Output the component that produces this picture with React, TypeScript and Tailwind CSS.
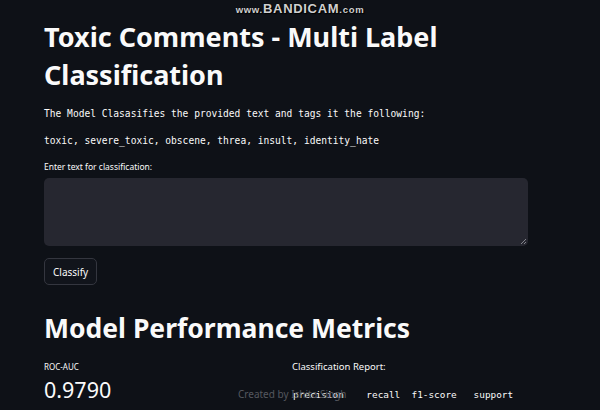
import React from "react";

export default function App() {
  const sans = { fontFamily: '"Noto Sans", "Open Sans", sans-serif' };
  const mono = { fontFamily: '"DejaVu Sans Mono", "Liberation Mono", monospace' };
  return (
    <div className="relative w-[600px] h-[410px] overflow-hidden bg-[#0e1117] text-[#fafafa]" style={sans}>
      <div className="absolute top-[1px] left-0 right-0 flex justify-center">
        <span
          className="text-[#d0d0d0] text-[13px] leading-[16px] font-bold tracking-[0.7px]"
          style={{ fontFamily: '"Liberation Sans", Arial, sans-serif', textShadow: "0 0 1px #000, 1px 1px 1px #000" }}
        >
          <span className="text-[9.5px]">www.</span>BANDICAM<span className="text-[9.5px]">.com</span>
        </span>
      </div>
      <div className="pl-[44px] pr-[72px] pt-[18px] flex flex-col">
        <h1 className="text-[27px] leading-[38px] font-bold">
          Toxic Comments - Multi Label Classification
        </h1>
        <p className="mt-[13px] text-[9.6px] leading-[14px] whitespace-pre" style={mono}>
          The Model Clasasifies the provided text and tags it the following:
        </p>
        <p className="mt-[13px] text-[9.6px] leading-[14px] whitespace-pre" style={mono}>
          toxic, severe_toxic, obscene, threa, insult, identity_hate
        </p>
        <label className="mt-[13px] text-[8.5px] leading-[12px]">Enter text for classification:</label>
        <div className="mt-[5px] h-[68px] rounded-[5px] bg-[#262730] relative">
          <svg className="absolute right-[1px] bottom-[1px]" width="7" height="7" viewBox="0 0 7 7">
            <path d="M6 1L1 6M6 4L4 6" stroke="#9a9ba3" strokeWidth="0.8" />
          </svg>
        </div>
        <div className="mt-[12px]">
          <button className="h-[27px] px-[8px] rounded-[5px] border border-[#34363f] bg-[#11141b] text-[10px] leading-[12px] text-[#fafafa] flex items-center">
            Classify
          </button>
        </div>
        <h2 className="mt-[24px] text-[26.5px] leading-[38px] font-bold">
          Model Performance Metrics
        </h2>
        <div className="mt-[14px] flex">
          <div className="w-[248px] flex flex-col">
            <span className="text-[8px] leading-[12px]">ROC-AUC</span>
            <span className="mt-[4px] text-[21.5px] leading-[26px]">0.9790</span>
          </div>
          <div className="flex flex-col">
            <span className="text-[9.5px] leading-[12px]">Classification Report:</span>
            <pre className="mt-[15px] ml-[1px] text-[9.4px] leading-[14px]" style={mono}>precision    recall  f1-score   support</pre>
          </div>
        </div>
      </div>
      <div className="absolute left-[238px] top-[388px] text-[10px] leading-[12px] text-[#55585f]">Created by Ishita Singh</div>
    </div>
  );
}
